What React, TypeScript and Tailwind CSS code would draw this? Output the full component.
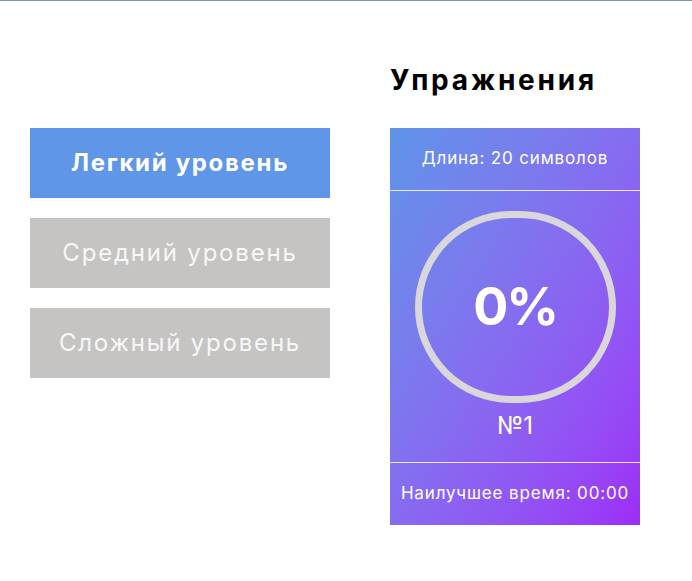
import React from "react";

export default function App() {
  const font = { fontFamily: '"Inter", "Open Sans", sans-serif' };
  return (
    <div className="min-h-[581px] w-full bg-white border-t border-[#7a9ab8]" style={font}>
      <div className="flex">
        <div className="ml-[30px] mt-[127px] flex w-[300px] flex-col gap-[20px]">
          <div className="flex h-[70px] items-center justify-center bg-[#5f96e8] text-[24px] font-bold tracking-[0.07em] text-white">
            Легкий уровень
          </div>
          <div className="flex h-[70px] items-center justify-center bg-[#c6c4c2] text-[24px] tracking-[0.075em] text-[#f7f7f7]">
            Средний уровень
          </div>
          <div className="flex h-[70px] items-center justify-center bg-[#c6c4c2] text-[24px] tracking-[0.075em] text-[#f7f7f7]">
            Сложный уровень
          </div>
        </div>
        <div className="ml-[60px] flex flex-col">
          <h1 className="mt-[59px] h-[40px] text-[28px] font-bold leading-[40px] tracking-[0.1em] text-black">Упражнения</h1>
          <div className="mt-[28px] flex w-[250px] flex-col bg-gradient-to-br from-[#5d94e8] to-[#9d2bf7] text-white">
            <div className="flex h-[63px] items-center justify-center border-b border-white/85 text-[17px] tracking-[0.05em]">
              Длина: 20 символов
            </div>
            <div className="flex h-[272px] flex-col items-center border-b border-white/85 pt-[20px]">
              <div className="flex h-[192px] w-[201px] items-center justify-center rounded-full border-[7px] border-[#d9d7db]">
                <span className="text-[52px] font-bold leading-none tracking-[-0.04em]">0%</span>
              </div>
              <div className="mt-[7px] text-[24px] leading-[32px]">№1</div>
            </div>
            <div className="flex h-[62px] items-center justify-center text-[17px] tracking-[0.05em]">
              Наилучшее время: 00:00
            </div>
          </div>
        </div>
      </div>
    </div>
  );
}
